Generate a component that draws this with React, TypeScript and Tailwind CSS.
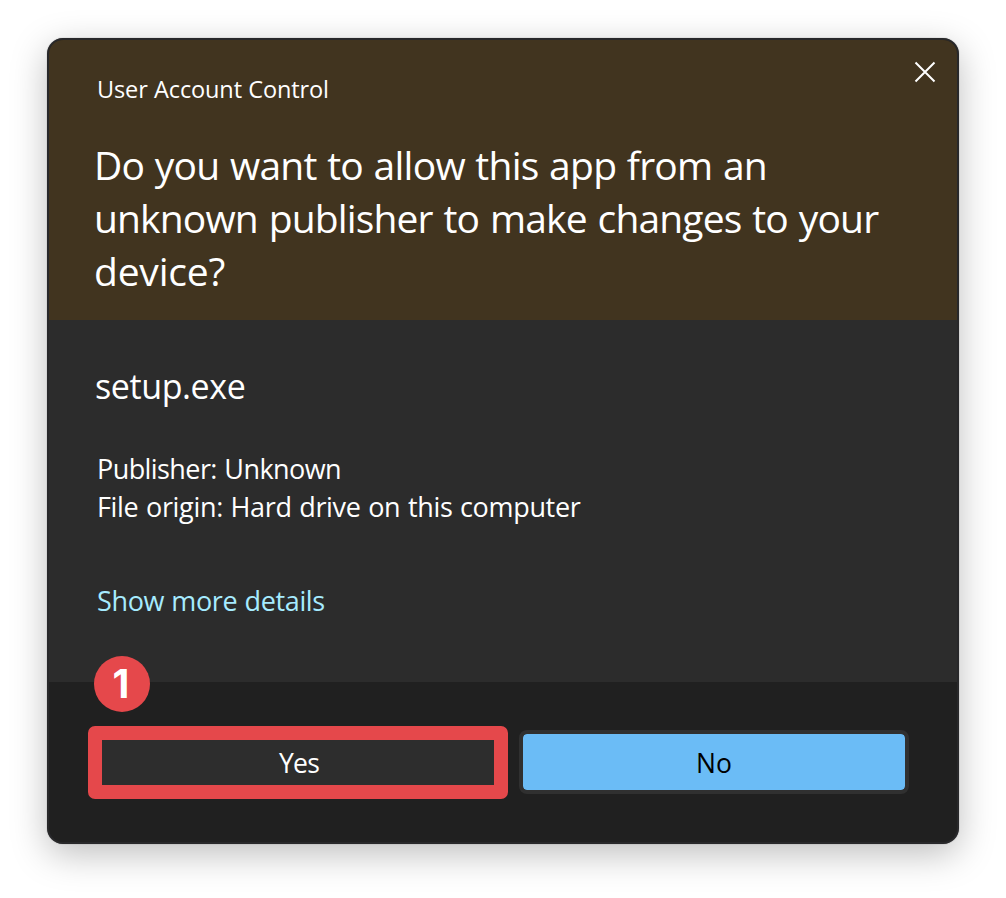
export default function App() {
  return (
    <main className="h-[898px] w-[1006px] overflow-hidden bg-white pl-[47px] pt-[38px] font-['Open_Sans','Noto_Sans',sans-serif] text-white">
      <section className="relative flex h-[806px] w-[912px] flex-col overflow-hidden rounded-[16px] border-2 border-[#28282a] bg-[#202020] shadow-[0_0_1px_rgba(0,0,0,0.5),0_10px_36px_rgba(0,0,0,0.26)]">
        <header className="h-[280px] shrink-0 bg-[#41341f] pl-[45px] pt-[31px]">
          <p className="w-fit pl-[3px] text-[23.5px] leading-[36px] tracking-[-0.13px] whitespace-nowrap [word-spacing:0.5px]">User Account Control</p>
          <h1 className="mt-[31px] text-[39px] leading-[53px] whitespace-nowrap">
            <span className="block tracking-[-0.72px] [word-spacing:1px]">Do you want to allow this app from an</span>
            <span className="block tracking-[-0.86px] [word-spacing:1.6px]">unknown publisher to make changes to your</span>
            <span className="block tracking-[-0.2px]">device?</span>
          </h1>
        </header>
        <div className="h-[362px] shrink-0 bg-[#2c2c2c] pl-[46px] pt-[43px]">
          <h2 className="text-[34px] leading-[46px] tracking-[-0.4px]">setup.exe</h2>
          <div className="mt-[41px] pl-[2px] text-[27px] leading-[38px]">
            <p className="tracking-[-0.58px] [word-spacing:1px]">Publisher: Unknown</p>
            <p className="tracking-[-0.33px] [word-spacing:0.9px]">File origin: Hard drive on this computer</p>
          </div>
          <a className="mt-[56px] block pl-[2px] text-[27px] leading-[38px] tracking-[-0.35px] text-[#a6ebff] [word-spacing:0.5px]">Show more details</a>
        </div>
        <footer className="flex pl-[39px] pt-[44px]">
          <button className="h-[73px] w-[420px] rounded-[7px] border-[14px] border-[#e5484b] bg-[#2d2d2d] pl-[2px] pt-[2px] text-[26.5px] tracking-[-0.8px]">Yes</button>
          <button className="ml-[11px] mt-[4px] h-[64px] w-[390px] rounded-[8px] border-4 border-[#303030] bg-[#6bbcf6] bg-clip-padding pt-[3px] text-[26.5px] text-black">No</button>
        </footer>
        <button aria-label="Close" className="absolute right-[20px] top-[20px]">
          <svg width="24" height="24" viewBox="0 0 24 24" stroke="white" strokeWidth="2"><path d="M2.5 2.5L21.5 21.5M21.5 2.5L2.5 21.5" /></svg>
        </button>
        <span className="absolute left-[45px] top-[616px] flex size-[56px] items-center justify-center rounded-full bg-[#e5484b] pr-[2px] font-['Inter',sans-serif] text-[39px] font-bold">1</span>
      </section>
    </main>
  );
}
